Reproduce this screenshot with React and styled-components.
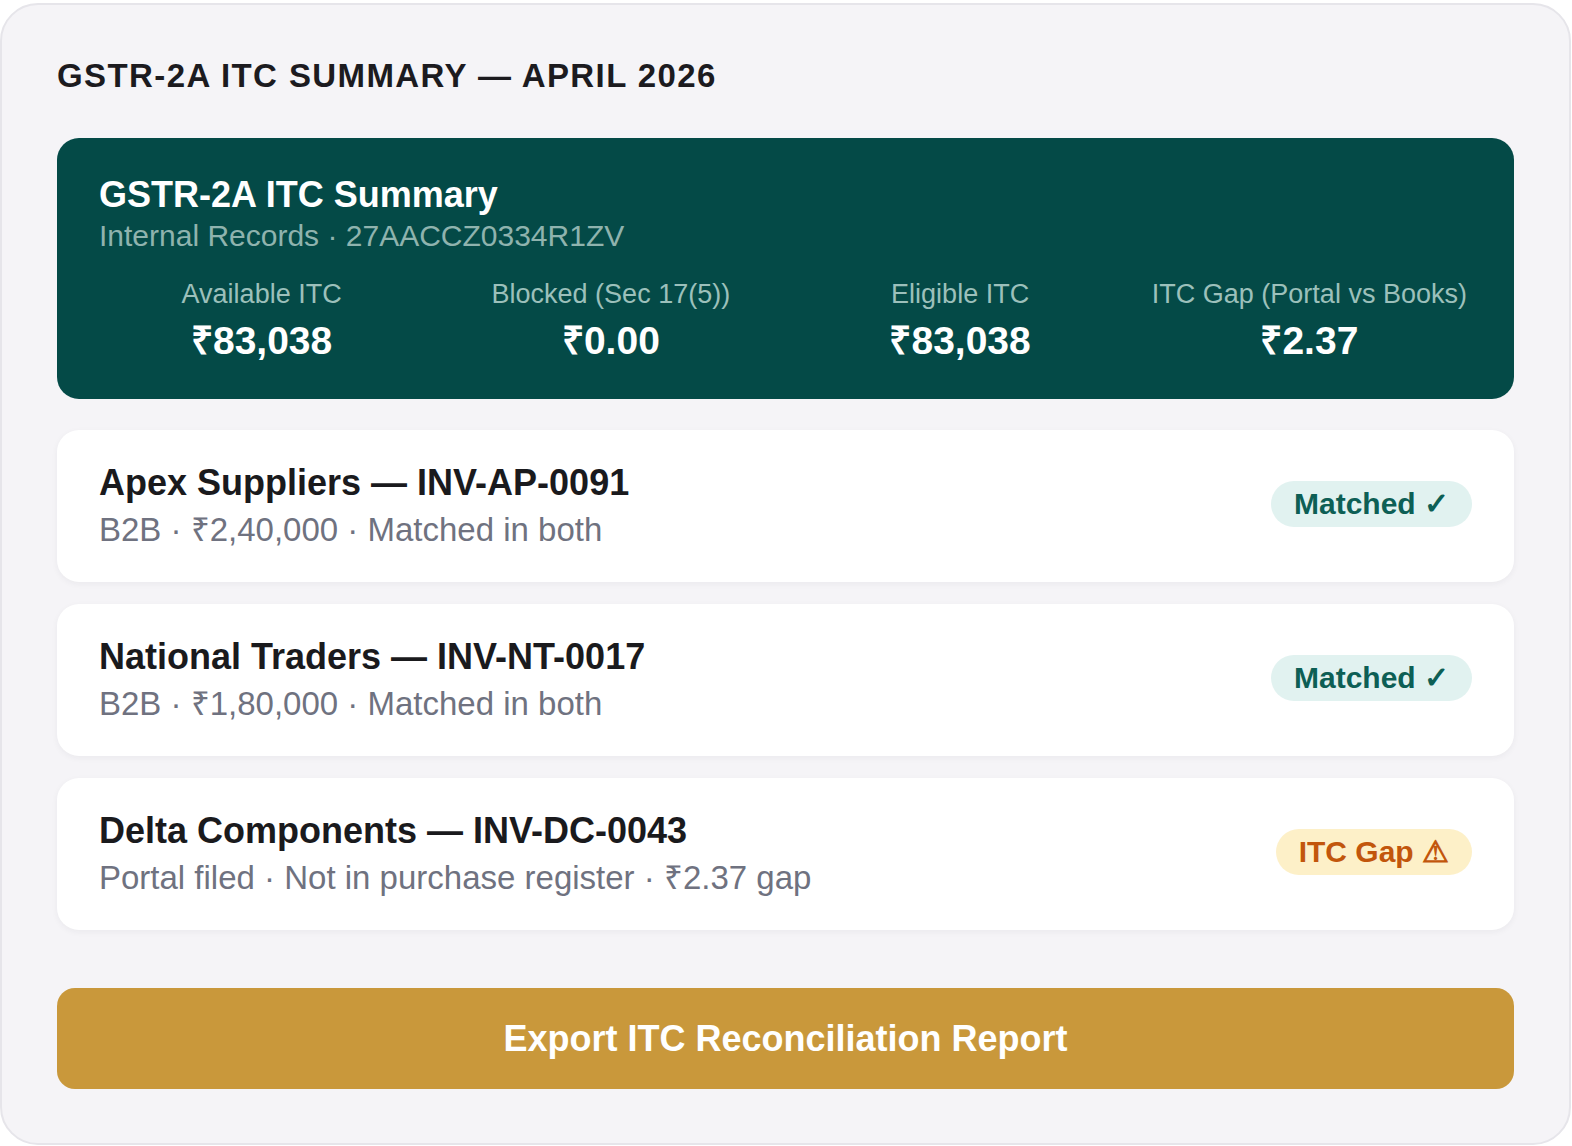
import styled, { createGlobalStyle } from "styled-components";

const GlobalStyle = createGlobalStyle`
  html, body {
    margin: 0;
    padding: 0;
    background: #ffffff;
  }
  body {
    font-family: "Liberation Sans", Arial, sans-serif;
  }
  * {
    box-sizing: border-box;
  }
`;

const Frame = styled.div`
  margin: 3px 1px 3px 0;
  min-height: 1141px;
  border: 2px solid #e6e5ea;
  border-radius: 38px;
  background: #f5f4f7;
  padding: 52px 55px 54px 55px;
  display: flex;
  flex-direction: column;
`;

const PageTitle = styled.h1`
  margin: 0 0 43px 0;
  font-size: 33px;
  line-height: 38px;
  font-weight: 700;
  letter-spacing: 1.4px;
  text-transform: uppercase;
  color: #1c1b1f;
`;

const SummaryCard = styled.section`
  background: #044a47;
  border-radius: 22px;
  padding: 36px 42px 28px 42px;
  color: #ffffff;
`;

const SummaryTitle = styled.h2`
  margin: 0;
  font-size: 36px;
  line-height: 42px;
  font-weight: 700;
`;

const SummarySub = styled.div`
  font-size: 30px;
  line-height: 40px;
  color: #8fb3ae;
`;

const StatGrid = styled.div`
  display: grid;
  grid-template-columns: repeat(4, 1fr);
  column-gap: 24px;
  margin-top: 21px;
`;

const Stat = styled.div`
  display: flex;
  flex-direction: column;
  align-items: center;
`;

const StatLabel = styled.div`
  font-size: 27px;
  line-height: 34px;
  color: #9cc0bb;
`;

const StatValue = styled.div`
  font-size: 39px;
  line-height: 60px;
  font-weight: 700;
  color: #ffffff;
`;

const List = styled.div`
  display: flex;
  flex-direction: column;
  gap: 22px;
  margin-top: 31px;
`;

const Row = styled.div`
  background: #ffffff;
  border-radius: 22px;
  height: 152px;
  padding: 0 42px;
  display: flex;
  align-items: center;
  justify-content: space-between;
  box-shadow: 0 2px 6px rgba(30, 30, 60, 0.05);
`;

const RowText = styled.div`
  display: flex;
  flex-direction: column;
  margin-top: 5px;
`;

const RowTitle = styled.div`
  font-size: 36px;
  line-height: 42px;
  font-weight: 700;
  color: #1a1a1d;
`;

const RowSub = styled.div`
  font-size: 33px;
  line-height: 52px;
  color: #6f7280;
`;

const Badge = styled.span`
  margin-bottom: 4px;
  font-weight: 700;
  font-size: 30px;
  line-height: 46px;
  padding: 0 23px;
  border-radius: 999px;
  white-space: nowrap;
  background: ${(p) => (p.$tone === "warn" ? "#fdf0c8" : "#e1f2f0")};
  color: ${(p) => (p.$tone === "warn" ? "#c2560c" : "#0d5f55")};
`;

const ExportButton = styled.button`
  margin-top: 58px;
  height: 101px;
  width: 100%;
  border: none;
  border-radius: 18px;
  background: #c9983b;
  color: #ffffff;
  font-family: "Liberation Sans", Arial, sans-serif;
  font-size: 36px;
  font-weight: 700;
  cursor: pointer;
`;

const stats = [
  { label: "Available ITC", value: "₹83,038" },
  { label: "Blocked (Sec 17(5))", value: "₹0.00" },
  { label: "Eligible ITC", value: "₹83,038" },
  { label: "ITC Gap (Portal vs Books)", value: "₹2.37" },
];

const invoices = [
  {
    title: "Apex Suppliers — INV-AP-0091",
    sub: "B2B · ₹2,40,000 · Matched in both",
    badge: "Matched ✓",
    tone: "ok",
  },
  {
    title: "National Traders — INV-NT-0017",
    sub: "B2B · ₹1,80,000 · Matched in both",
    badge: "Matched ✓",
    tone: "ok",
  },
  {
    title: "Delta Components — INV-DC-0043",
    sub: "Portal filed · Not in purchase register · ₹2.37 gap",
    badge: "ITC Gap ⚠",
    tone: "warn",
  },
];

export default function App() {
  return (
    <>
      <GlobalStyle />
      <Frame>
        <PageTitle>GSTR-2A ITC Summary — April 2026</PageTitle>
        <SummaryCard>
          <SummaryTitle>GSTR-2A ITC Summary</SummaryTitle>
          <SummarySub>Internal Records · 27AACCZ0334R1ZV</SummarySub>
          <StatGrid>
            {stats.map((s) => (
              <Stat key={s.label}>
                <StatLabel>{s.label}</StatLabel>
                <StatValue>{s.value}</StatValue>
              </Stat>
            ))}
          </StatGrid>
        </SummaryCard>
        <List>
          {invoices.map((inv) => (
            <Row key={inv.title}>
              <RowText>
                <RowTitle>{inv.title}</RowTitle>
                <RowSub>{inv.sub}</RowSub>
              </RowText>
              <Badge $tone={inv.tone}>{inv.badge}</Badge>
            </Row>
          ))}
        </List>
        <ExportButton>Export ITC Reconciliation Report</ExportButton>
      </Frame>
    </>
  );
}
